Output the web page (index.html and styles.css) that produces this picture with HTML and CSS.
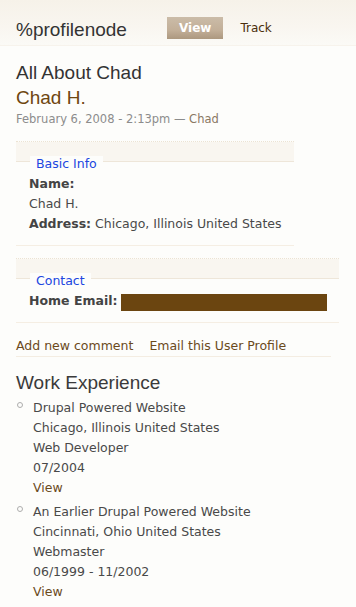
FILE: index.html
```html
<!DOCTYPE html>
<html lang="en">
<head>
    <meta charset="UTF-8">
    <meta name="viewport" content="width=device-width, initial-scale=1.0">
    <title>%profilenode</title>
    <link rel="stylesheet" href="styles.css">
</head>
<body>
    <!-- Page header with tabs -->
    <div class="header">
        <h1 class="site-title">%profilenode</h1>
        <ul class="tabs">
            <li class="tab active">View</li>
            <li class="tab">Track</li>
        </ul>
    </div>

    <div class="content">
        <h2 class="node-title">All About Chad</h2>
        <h3 class="profile-name">Chad H.</h3>
        <div class="submitted">February 6, 2008 - 2:13pm &mdash; <span class="author">Chad</span></div>

        <!-- Basic info group -->
        <div class="fieldset">
            <div class="legend">Basic Info</div>
            <div class="field"><b>Name:</b></div>
            <div class="field">Chad H.</div>
            <div class="field"><b>Address:</b> Chicago, Illinois United States</div>
        </div>

        <!-- Contact group -->
        <div class="fieldset second">
            <div class="legend">Contact</div>
            <div class="field"><b>Home Email:</b> <span class="redacted"></span></div>
        </div>

        <ul class="links">
            <li>Add new comment</li>
            <li>Email this User Profile</li>
        </ul>

        <h2 class="section-title">Work Experience</h2>
        <ul class="jobs">
            <li>
                <div>Drupal Powered Website</div>
                <div>Chicago, Illinois United States</div>
                <div>Web Developer</div>
                <div>07/2004</div>
                <div class="view-link">View</div>
            </li>
            <li>
                <div>An Earlier Drupal Powered Website</div>
                <div>Cincinnati, Ohio United States</div>
                <div>Webmaster</div>
                <div>06/1999 - 11/2002</div>
                <div class="view-link">View</div>
            </li>
        </ul>
    </div>
</body>
</html>
```

FILE: styles.css
```css
/* Base page */
body {
    margin: 0;
    background-color: #fdfdfb;
    color: #494949;
    font-family: "DejaVu Sans", Verdana, sans-serif;
    font-size: 12.5px;
    line-height: 20px;
}

/* Header strip */
.header {
    display: flex;
    align-items: flex-start;
    height: 45px;
    padding-left: 16px;
    background: linear-gradient(to bottom, #f6f2e9 0%, #f9f6f0 60%, #fbfaf6 100%);
    border-bottom: 1px solid #f7f3ec;
}

.site-title {
    width: 151px;
    margin: 19px 0 0 0;
    font-family: "Liberation Sans", Arial, sans-serif;
    font-size: 19px;
    font-weight: normal;
    line-height: 22px;
    color: #333333;
}

.tabs {
    display: flex;
    list-style: none;
    margin: 17px 0 0 0;
    padding: 0;
}

.tab {
    padding: 0 12px;
    margin-right: 5px;
    font-size: 12px;
    line-height: 22px;
    color: #4a2e0c;
}

.tab.active {
    background: linear-gradient(to bottom, #cbbca8 0%, #c2af98 60%, #ac987f 100%);
    color: #ffffff;
    font-weight: bold;
}

/* Main column */
.content {
    padding: 0 16px;
}

.node-title,
.profile-name,
.section-title {
    margin: 0;
    font-family: "Liberation Sans", Arial, sans-serif;
    font-size: 19px;
    font-weight: normal;
    line-height: 25px;
    color: #333333;
}

.node-title {
    margin-top: 14px;
}

.profile-name {
    color: #6e4610;
}

.submitted {
    margin-top: 1px;
    font-size: 11.5px;
    line-height: 16px;
    color: #8c8c8c;
}

.submitted .author {
    color: #8a7863;
}

/* Grouped profile fields */
.fieldset {
    width: fit-content;
    margin-top: 14px;
    padding: 0 12px 11px 13px;
    border-top: 1px dotted #ece3d3;
    border-bottom: 1px solid #f5eee3;
    background: linear-gradient(to bottom, #f9f6f0 0, #f9f6f0 19px, #eee6d9 19px, #eee6d9 20px, transparent 20px);
}

.fieldset.second {
    margin-top: 12px;
}

.legend {
    display: inline-block;
    margin: 14px 0 1px 1px;
    padding: 0 6px;
    line-height: 16px;
    background-color: #fdfdfb;
    color: #2045e0;
}

.field {
    white-space: nowrap;
}

.field b {
    color: #444444;
}

.redacted {
    display: inline-block;
    width: 206px;
    height: 17px;
    vertical-align: -6px;
    background-color: #6b4510;
}

/* Node links */
.links {
    display: flex;
    gap: 16px;
    width: 315px;
    list-style: none;
    margin: 13px 0 0 0;
    padding: 0;
    border-bottom: 1px solid #f4ede2;
    color: #6b4a1c;
}

.section-title {
    margin-top: 13px;
    color: #3a3a3a;
}

/* Work experience list */
.jobs {
    list-style: none;
    margin: 3px 0 0 0;
    padding: 0 0 0 17px;
}

.jobs li {
    position: relative;
    margin-bottom: 4px;
}

.jobs li::before {
    content: "";
    position: absolute;
    left: -16px;
    top: 4px;
    width: 4px;
    height: 4px;
    border: 1px solid #adadad;
    border-radius: 50%;
}

.view-link {
    color: #6b4a1c;
}
```
